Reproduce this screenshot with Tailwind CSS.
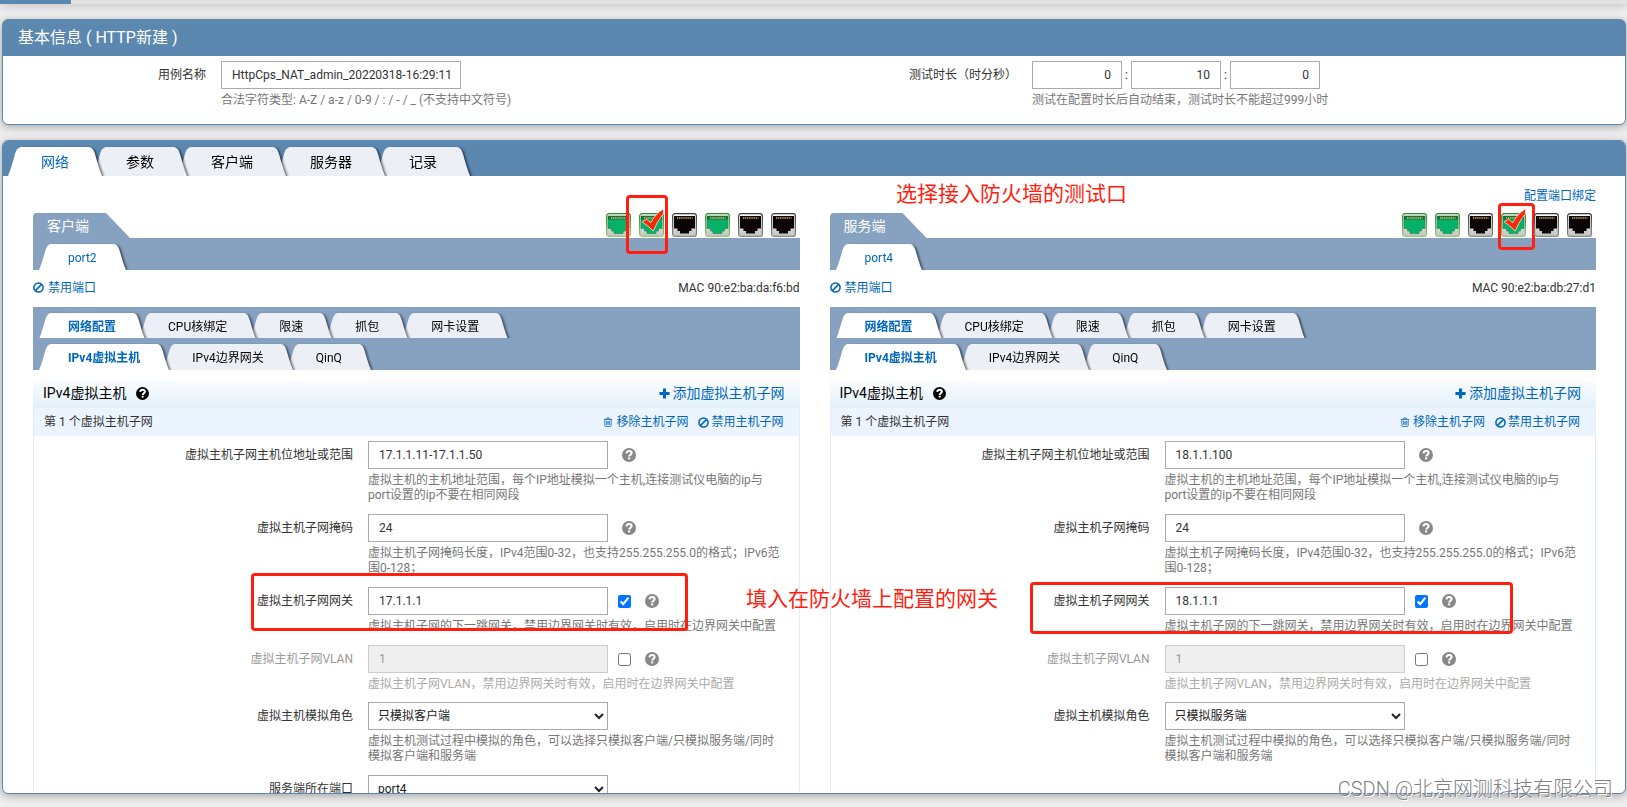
<!DOCTYPE html>
<html lang="zh-CN">
<head>
<meta charset="utf-8">
<title>基本信息 ( HTTP新建 )</title>
<script src="https://cdn.jsdelivr.net/npm/@tailwindcss/browser@4"></script>
</head>
<body class="relative flex h-screen flex-col overflow-hidden bg-[#eeeeee] font-['Roboto','Noto_Sans_CJK_SC',sans-serif] text-xs text-[#333333]">
<svg class="absolute size-0" aria-hidden="true">
  <symbol id="ban" viewBox="0 0 12 12"><circle cx="6" cy="6" r="5" fill="none" stroke="currentColor" stroke-width="1.7"/><path d="M2.6 9.4 9.4 2.6" stroke="currentColor" stroke-width="1.7"/></symbol>
  <symbol id="plus" viewBox="0 0 12 12"><path d="M6 .5v11M.5 6h11" stroke="currentColor" stroke-width="3.4"/></symbol>
  <symbol id="trash" viewBox="0 0 12 12"><path d="M1 2.9h10M4 2.7l.6-1.500h2.8L8 2.7M2.2 3v7.2q0 1.1 1 1.1h5.6q1 0 1-1.1V3M4.4 4.8v4.7M6 4.8v4.7M7.6 4.8v4.7" fill="none" stroke="currentColor" stroke-width="1"/></symbol>
  <symbol id="help" viewBox="0 0 14 14"><circle cx="7" cy="7" r="7" fill="currentColor"/><path d="M4.5 5.3C4.7 3.7 5.7 3 7.1 3 8.6 3 9.6 3.9 9.6 5.1 9.6 6.7 7.2 6.9 7.2 8.5" fill="none" stroke="#fff" stroke-width="2.1"/><path d="M6.1 9.4h2.1v2h-2.100z" fill="#fff"/></symbol>
  <symbol id="tabL" viewBox="0 0 14 29" preserveAspectRatio="none"><path d="M0 29C3 22 5 14 7 7 8.500 2 10.500 0 14 0V29Z" fill="currentColor"/></symbol>
  <symbol id="tabR" viewBox="0 0 14 29" preserveAspectRatio="none"><path d="M14 29C11 22 9 14 7 7 5.500 2 3.500 0 0 0V29Z" fill="currentColor"/></symbol>
  <linearGradient id="metal" x1="0" y1="0" x2="0" y2="1"><stop offset="0" stop-color="#fafafa"/><stop offset="1" stop-color="#c2c4c4"/></linearGradient>
  <linearGradient id="rimOn" x1="0" y1="0" x2="0" y2="1"><stop offset="0" stop-color="#2c8a2c"/><stop offset="1" stop-color="#9ccc68"/></linearGradient>
  <linearGradient id="rimOff" x1="0" y1="0" x2="0" y2="1"><stop offset="0" stop-color="#3c3c3c"/><stop offset="1" stop-color="#8c8c8c"/></linearGradient>
  <symbol id="portOn" viewBox="0 0 25 24"><rect x=".6" y=".6" width="23.800" height="22.800" rx="2.500" fill="url(#metal)" stroke="url(#rimOn)" stroke-width="1.200"/><path d="M2 3h21v12.500h-3.500v2.500h-2.500v2.500H8V18H5.500v-2.500H2Z" fill="#05b268" stroke="#247f4c" stroke-width=".6"/><path d="M2 3h21v3.500H2Z" fill="#1c6a3c"/><path d="M5 5h15.500" stroke="#b9b458" stroke-width="2.200" stroke-dasharray="1.300 .8"/></symbol>
  <symbol id="portOff" viewBox="0 0 25 24"><rect x=".6" y=".6" width="23.800" height="22.800" rx="2.500" fill="url(#metal)" stroke="url(#rimOff)" stroke-width="1.200"/><path d="M2 3h21v12.500h-3.500v2.500h-2.500v2.500H8V18H5.500v-2.500H2Z" fill="#0b0505"/><path d="M5 5h15.500" stroke="#a8893c" stroke-width="2.200" stroke-dasharray="1.300 .8"/></symbol>
  <symbol id="tick" viewBox="0 0 24 26"><path d="M.8 14.500 5.500 11.500 9.500 15.500Q14.500 6 23 .8L22.800 6Q16 14 12.300 24Q7 18.500 .8 14.500Z" fill="#fb2705" stroke="#fff" stroke-width=".7"/></symbol>
</svg>

<div class="h-1 shrink-0 bg-[#e2e2e0] shadow-[0_1px_8px_rgba(0,0,0,0.3)]"><div class="h-1 w-[71px] bg-[#5c87af]"></div></div>

<section class="ml-0.5 mr-px mt-[15px] shrink-0 rounded-md border border-[#5c87af] bg-white shadow-[0_2px_8px_rgba(0,0,0,0.3)]">
  <h1 class="rounded-t-sm bg-[#5c87af] px-[15px] pb-1 pt-1 text-base leading-7 text-white">基本信息 ( HTTP新建 )</h1>
  <div class="grid grid-cols-2 pb-[11px] pt-[5px]">
    <div class="flex gap-[15px]">
      <label for="casename" class="w-[203px] shrink-0 text-right leading-7">用例名称</label>
      <div>
        <input id="casename" value="HttpCps_NAT_admin_20220318-16:29:11" class="block h-7 w-60 border border-[#aaaaaa] bg-white px-2.5">
        <p class="mt-0.5 pb-1 leading-[18px] text-[#777777]">合法字符类型: A-Z / a-z / 0-9 / : / - / _ (不支持中文符号)</p>
      </div>
    </div>
    <div class="flex gap-[15px]">
      <label for="hours" class="w-[203px] shrink-0 text-right leading-7">测试时长（时分秒）</label>
      <div>
        <div class="flex items-center text-center">
          <input id="hours" value="0" class="h-7 w-[90px] border border-[#aaaaaa] px-2.5 text-right"><span class="w-[9px]">:</span>
          <input aria-label="分" value="10" class="h-7 w-[90px] border border-[#aaaaaa] px-2.5 text-right"><span class="w-[9px]">:</span>
          <input aria-label="秒" value="0" class="h-7 w-[90px] border border-[#aaaaaa] px-2.5 text-right">
        </div>
        <p class="mt-0.5 pb-1 leading-[18px] text-[#777777]">测试在配置时长后自动结束，测试时长不能超过999小时</p>
      </div>
    </div>
  </div>
</section>

<section class="mb-[13px] ml-0.5 mr-px mt-[15px] flex min-h-0 flex-1 flex-col overflow-hidden rounded-md border border-[#5c87af] bg-white shadow-[0_2px_8px_rgba(0,0,0,0.3)]">
  <nav id="mainTabs" class="flex shrink-0 overflow-hidden bg-[#5c87af] pl-[5px] pt-1.5 text-sm"></nav>
  <div class="flex justify-end pb-2 pr-[29px] pt-[11px]"><a href="#" class="leading-[18px] text-[#0066bb]">配置端口绑定</a></div>
  <div id="sides" class="grid grid-cols-2 gap-[30px] pl-[30px] pr-[29px]"></div>
</section>

<p class="absolute left-[896px] top-[180px] text-[21px] leading-7 text-[#ff1e0f]">选择接入防火墙的测试口</p>
<p class="absolute left-[746px] top-[585px] text-[21px] leading-7 text-[#ff1e0f]">填入在防火墙上配置的网关</p>
<p class="absolute bottom-1 right-[14px] text-[20px] font-light leading-7 text-[#808080] [text-shadow:1px_1px_0_#ffffff]">CSDN @北京网测科技有限公司</p>

<script>
const stack = ['z-50', 'z-40', 'z-30', 'z-20', 'z-10'];
const shadow = '[filter:drop-shadow(2px_1px_1px_rgba(0,0,0,0.55))]';

function tabs(names, big, bold) {
  return names.map((name, i) => {
    const on = i === 0;
    const tone = on ? 'text-white' : 'text-[#eceff5]';
    const fill = on ? 'bg-white' : 'bg-[#eceff5]';
    const ink = on ? 'text-[#0066bb]' : 'text-black';
    const size = big ? 'h-[29px]' : 'h-[26px]';
    const pad = big ? 'px-[19px]' : 'px-4 pt-0.5';
    const pull = on ? '' : big ? '-ml-[9px]' : '-ml-1.5';
    const side = big ? 'w-3.5' : 'w-[13px]';
    return `<button type="button" class="relative flex items-stretch ${size} ${pull} ${stack[i]} ${shadow}">
      <svg class="h-full ${side} ${tone}" preserveAspectRatio="none"><use href="#tabL"/></svg>
      <span class="flex items-center ${pad} ${fill} ${ink} ${on && bold ? 'font-bold' : ''}">${name}</span>
      <svg class="h-full ${side} ${tone}" preserveAspectRatio="none"><use href="#tabR"/></svg>
    </button>`;
  }).join('');
}

function help() {
  return '<button type="button" aria-label="帮助" class="text-[#888888]"><svg class="size-3.5"><use href="#help"/></svg></button>';
}

function row(id, label, control, hint, o = {}) {
  return `<div class="relative flex gap-[15px] ${o.off ? 'text-[#999999]' : ''} ${o.off ? 'pb-3.5' : 'pb-[15px]'}">
    <label for="${id}" class="w-[319px] shrink-0 text-right leading-7">${label}</label>
    <div class="min-w-0 flex-1 pr-[15px]">
      <div class="flex h-7 items-center">${control}</div>
      <p class="leading-[15px] pt-[4px] -mb-[4px] ${o.off ? 'text-[#aaaaaa]' : 'text-[#777777]'}">${hint}</p>
    </div>${o.mark || ''}
  </div>`;
}

function field(id, value) {
  return `<input id="${id}" value="${value}" class="h-7 w-60 border border-[#aaaaaa] bg-white px-2.5 text-[#333333]">`;
}

function select(id, value) {
  return `<select id="${id}" class="h-7 w-60 border border-[#aaaaaa] bg-white pl-[5px] text-[#222222]"><option>${value}</option></select>`;
}

function side(s) {
  const ports = s.ports.map(p => `<button type="button" aria-label="端口" class="relative h-6 w-[25px]">
      <svg class="h-6 w-[25px]"><use href="${p === 0 ? '#portOff' : '#portOn'}"/></svg>
      ${p === 2 ? `<svg class="absolute -top-[5px] left-0.5 h-[25px] w-6"><use href="#tick"/></svg><span class="absolute ${s.portMark} rounded-[4px] border-[3px] border-[#ff1e0f]"></span>` : ''}
    </button>`).join('');
  const k = s.key;
  return `<div class="min-w-0">
    <div class="flex h-[25px] items-start justify-between">
      <h2 class="h-[25px] w-[97px] rounded-tl-sm bg-[#86a2c0] pl-3.5 text-sm leading-[26px] text-white [clip-path:polygon(0_0,73px_0,97px_100%,0_100%)]">${s.title}</h2>
      <div class="relative z-[60] flex gap-2 pr-1">${ports}</div>
    </div>
    <div class="flex overflow-hidden bg-[#86a2c0] pl-1.5 pt-1.5">${tabs([s.port], false, false)}</div>
    <div class="flex h-[37px] items-center justify-between pb-0.5">
      <a href="#" class="flex items-center gap-1 text-[#0066bb]"><svg class="size-[11px]"><use href="#ban"/></svg>禁用端口</a>
      <span>MAC ${s.mac}</span>
    </div>
    <div class="flex h-[31px] overflow-hidden bg-[#86a2c0] pl-1.5 pt-1.5">${tabs(['网络配置', 'CPU核绑定', '限速', '抓包', '网卡设置'], false, true)}</div>
    <div class="flex overflow-hidden bg-[#86a2c0] pl-1.5 pt-1.5">${tabs(['IPv4虚拟主机', 'IPv4边界网关', 'QinQ'], false, true)}</div>
    <div class="mt-2.5 flex h-7 items-center justify-between bg-linear-to-b from-[#fbfdff] to-[#e2f0f9] pb-0.5 pl-2.5 pr-[15px] text-sm text-black">
      <h3 class="flex items-center gap-2.5">IPv4虚拟主机<svg class="size-[13px]"><use href="#help"/></svg></h3>
      <a href="#" class="flex items-center gap-[3px] text-[#0066bb]"><svg class="size-[11px]"><use href="#plus"/></svg>添加虚拟主机子网</a>
    </div>
    <div class="border-x border-[#e1edf8]">
      <div class="flex h-7 items-center justify-between bg-[#ecf5ff] pl-2.5 pr-[15px]">
        <span>第 1 个虚拟主机子网</span>
        <span class="flex gap-2.5 text-[#0066bb]">
          <a href="#" class="flex items-center gap-[3px]"><svg class="size-2.5"><use href="#trash"/></svg>移除主机子网</a>
          <a href="#" class="flex items-center gap-0.5"><svg class="size-[11px]"><use href="#ban"/></svg>禁用主机子网</a>
        </span>
      </div>
      <div class="pt-[5px]">
        ${row(k + 'ip', '虚拟主机子网主机位地址或范围', field(k + 'ip', s.range) + `<span class="ml-3.5 flex">${help()}</span>`, '虚拟主机的主机地址范围，每个IP地址模拟一个主机,连接测试仪电脑的ip与port设置的ip不要在相同网段')}
        ${row(k + 'mask', '虚拟主机子网掩码', field(k + 'mask', '24') + `<span class="ml-3.5 flex">${help()}</span>`, '虚拟主机子网掩码长度，IPv4范围0-32，也支持255.255.255.0的格式；IPv6范围0-128；')}
        ${row(k + 'gw', '虚拟主机子网网关', field(k + 'gw', s.gw) + `<input type="checkbox" checked aria-label="启用网关" class="ml-2.5 mr-3.5 size-[13px]">${help()}`, '虚拟主机子网的下一跳网关，禁用边界网关时有效，启用时在边界网关中配置', {mark: `<span class="pointer-events-none absolute ${s.gwMark} rounded-[4px] border-[3px] border-[#ff1e0f]"></span>`})}
        ${row(k + 'vlan', '虚拟主机子网VLAN', `<input id="${k}vlan" value="1" disabled class="h-7 w-60 border border-[#cccccc] bg-[#efefef] px-2.5 text-[#999999]"><input type="checkbox" aria-label="启用VLAN" class="ml-2.5 mr-3.5 size-[13px]">${help()}`, '虚拟主机子网VLAN，禁用边界网关时有效，启用时在边界网关中配置', {off: true})}
        ${row(k + 'role', '虚拟主机模拟角色', select(k + 'role', s.role), '虚拟主机测试过程中模拟的角色，可以选择只模拟客户端/只模拟服务端/同时模拟客户端和服务端')}
        ${s.peer ? row(k + 'peer', '服务端所在端口', select(k + 'peer', s.peer), '') : '<div class="h-10"></div>'}
      </div>
    </div>
  </div>`;
}

document.getElementById('mainTabs').innerHTML = tabs(['网络', '参数', '客户端', '服务器', '记录'], true, false);
document.getElementById('sides').innerHTML = [
  {key: 'c', title: '客户端', port: 'port2', mac: '90:e2:ba:da:f6:bd', ports: [1, 2, 0, 1, 0, 0], range: '17.1.1.11-17.1.1.50', gw: '17.1.1.1', role: '只模拟客户端', peer: 'port4',
   portMark: '-left-[13px] -top-[18px] h-[59px] w-[42px]', gwMark: 'left-[217px] -top-3.5 h-[58px] w-[437px]'},
  {key: 's', title: '服务端', port: 'port4', mac: '90:e2:ba:db:27:d1', ports: [1, 1, 0, 2, 0, 0], range: '18.1.1.100', gw: '18.1.1.1', role: '只模拟服务端', peer: '',
   portMark: '-left-[3px] -top-2.5 h-[47px] w-[37px]', gwMark: 'left-[199px] -top-[5px] h-[52px] w-[483px]'}
].map(side).join('');
</script>
</body>
</html>
